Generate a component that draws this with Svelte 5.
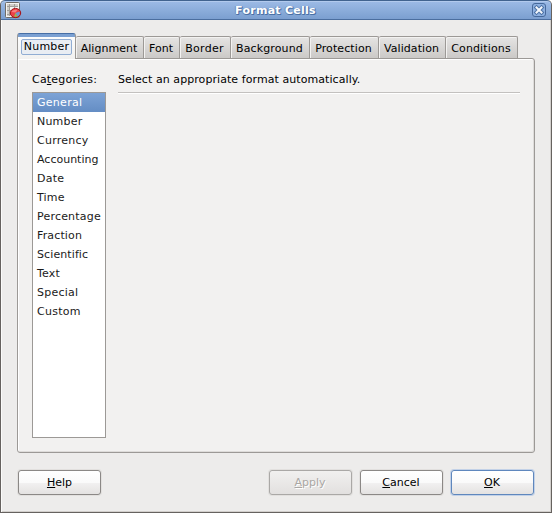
<script>
  const tabs = [
    { label: 'Alignment', width: 68, spacing: 0.03 },
    { label: 'Font', width: 36, spacing: 0 },
    { label: 'Border', width: 51, spacing: 0.3 },
    { label: 'Background', width: 79, spacing: 0.12 },
    { label: 'Protection', width: 69, spacing: 0.1 },
    { label: 'Validation', width: 67, spacing: 0.08 },
    { label: 'Conditions', width: 72, spacing: 0.14 }
  ];
  const categories = [
    { name: 'General', spacing: 0.28 },
    { name: 'Number', spacing: 0.2 },
    { name: 'Currency', spacing: 0.25 },
    { name: 'Accounting', spacing: 0 },
    { name: 'Date', spacing: 0.25 },
    { name: 'Time', spacing: 0.2 },
    { name: 'Percentage', spacing: 0.2 },
    { name: 'Fraction', spacing: 0.14 },
    { name: 'Scientific', spacing: 0.1 },
    { name: 'Text', spacing: 0.2 },
    { name: 'Special', spacing: 0.25 },
    { name: 'Custom', spacing: 0.25 }
  ];
  let selected = $state('General');
</script>

<div class="window">
  <header>
    <svg class="appicon" width="17" height="17" viewBox="0 0 17 17">
      <rect x=".5" y=".5" width="14" height="15" rx="1" fill="#f6f5f2" stroke="#6f6b66" />
      <path d="M2 2h11v2H2zM2 2h2v12H2z" fill="#cfcdc9" />
      <path d="M2 4.5h11M2 8.5h11M2 12.5h11M4.5 2v12M9.5 2v12" stroke="#a19e99" fill="none" />
      <ellipse cx="10.5" cy="11" rx="5.2" ry="4.6" fill="#ec4248" stroke="#a01217" />
      <path d="M10.5 11l4-1.500c.9 2.500-.4 4.200-2 5z" fill="#6c98d4" />
      <path d="M10.500 11l2 3.500c-1 .5-2.400.4-3.400 0z" fill="#93c34f" />
      <path d="M6.500 10c.8-2 4-2.800 6-2l-2 2.500z" fill="#f77f82" />
    </svg>
    <h1>Format Cells</h1>
    <svg class="close" width="15" height="15" viewBox="0 0 15 15">
      <rect x=".5" y=".5" width="13" height="13" rx="2.500" fill="#8db0e0" stroke="#46699b" />
      <path d="M4.500 4.500l5 5M9.500 4.500l-5 5" stroke="#4d72a5" stroke-width="4" stroke-linecap="square" />
      <path d="M4.500 4.500l5 5M9.500 4.500l-5 5" stroke="#f3f7fc" stroke-width="2" stroke-linecap="square" />
    </svg>
  </header>
  <nav>
    <div class="tab active"><span>Number</span></div>
    {#each tabs as t}
      <div class="tab" style="width:{t.width}px;letter-spacing:{t.spacing}px">{t.label}</div>
    {/each}
  </nav>
  <main>
    <section class="left">
      <div class="label caption">Ca<u>t</u>egories:</div>
      <ul>
        {#each categories as c}
          <li class:selected={c.name === selected} style="letter-spacing:{c.spacing}px">{c.name}</li>
        {/each}
      </ul>
    </section>
    <section class="right">
      <div class="label">Select an appropriate format automatically.</div>
      <div class="rule"></div>
    </section>
  </main>
  <footer>
    <button class="help"><u>H</u>elp</button>
    <button class="disabled"><u>A</u>pply</button>
    <button><u>C</u>ancel</button>
    <button class="default"><u>O</u>K</button>
  </footer>
</div>

<style>
  * { box-sizing: border-box; }
  :global(body) { margin: 0; background: #fff; overflow: hidden; }
  .window {
    width: 552px; height: 513px; display: flex; flex-direction: column;
    border: 1px solid #66625f; border-top: 0; border-radius: 5px 5px 0 0;
    background: #edeceb; box-shadow: inset 1px 0 #fbfbfa, inset -1px -1px #d2cfcc;
    font: 11px/14px "DejaVu Sans", sans-serif; color: #000; overflow: hidden;
    font-variant-ligatures: none;
  }
  header {
    flex: none; height: 20px; margin: 0 -1px; padding: 0 5px; display: flex;
    border: 1px solid #41638f; border-bottom-color: #4b6e9f; border-radius: 5px 5px 0 0;
    background: linear-gradient(#9dbbe6, #7b9fd0); box-shadow: inset 0 1px #b2caed;
  }
  .appicon { flex: none; margin-top: 1px; margin-left: -1px; }
  .close { flex: none; margin-top: 2px; margin-right: -1px; }
  h1 {
    flex: 1; margin: 3px 0 0; padding-right: 3px; font: bold 11px/14px "DejaVu Sans", sans-serif; text-align: center;
    letter-spacing: .27px; color: #fff;
    text-shadow: 1px 1px #4a70a5, 0 1px #5a80b4, -1px 0 #6b90c3, 1px 0 #6288bc;
  }
  nav { flex: none; display: flex; align-items: flex-end; height: 38px; padding-left: 16px; }
  .tab {
    height: 22px; padding: 5px 1px 0 0; text-align: center; white-space: nowrap;
    border: 1px solid #9c9996; border-bottom: 0; border-left: 0; border-radius: 2px 2px 0 0;
    background: linear-gradient(#e5e4e3, #cbc9c7); box-shadow: inset 1px 1px #f3f2f1;
  }
  .tab.active {
    width: 59px; height: 26px; padding: 3px 0 0; position: relative; z-index: 1; margin-bottom: -1px;
    border: 1px solid #9c9996; border-top: 1px solid #466ea5; border-bottom: 0; border-radius: 3px 3px 0 0;
    background: linear-gradient(#7ba0d2 0 3px, #fcfcfc 3px, #f2f1f0);
    box-shadow: none; letter-spacing: .2px;
  }
  .active span {
    display: block; height: 16px; margin: 2px 3px; line-height: 14px;
    border: 1px solid #91add3; border-radius: 2px; background: #e9edf3;
  }
  main {
    flex: none; width: 518px; height: 395px; margin-left: 16px; display: flex; padding: 14px 13px 0 14px;
    border: 1px solid #9c9996; border-radius: 0 3px 3px 3px; background: #f2f1f0;
    box-shadow: inset 1px 1px #fff, inset -1px -1px #dedcda;
  }
  .left { width: 74px; margin-right: 12px; }
  .right { flex: 1; }
  .label { height: 19px; white-space: nowrap; letter-spacing: .07px; }
  .caption { letter-spacing: .2px; }
  ul { width: 74px; height: 346px; margin: 0; padding: 0; list-style: none; border: 1px solid #9c9996; background: #fff; }
  li { height: 19px; padding: 3px 0 0 4px; white-space: nowrap; color: #1a1a1a; }
  .selected { color: #fff; background: linear-gradient(#7da3d6, #648dc4); }
  .rule { height: 2px; width: 402px; background: #c3c1bf; border-bottom: 1px solid #fff; }
  footer { display: flex; gap: 8px; padding: 17px 17px 0 17px; }
  button {
    width: 83px; height: 25px; margin: 0; padding: 0; font: inherit; color: #000;
    border: 1px solid #8b8886; border-radius: 3px; background: linear-gradient(#fff, #fafafa 50%, #f2f1f1 51%, #e4e2e1);
    box-shadow: 0 0 0 1px #e2e0de;
  }
  button:nth-child(n + 2) { padding-right: 1px; }
  .help { margin-right: 160px; }
  .disabled { color: #aaa7a4; border-color: #aaa8a6; background: linear-gradient(#f1f0ef, #e2e0df); text-shadow: 1px 1px #fff; }
  .default { border-color: #5f87bd; box-shadow: 0 0 0 1px #c2d1e7; }
  u { text-decoration: underline; text-decoration-thickness: 1px; text-underline-offset: 1px; text-decoration-skip-ink: none; }
</style>
